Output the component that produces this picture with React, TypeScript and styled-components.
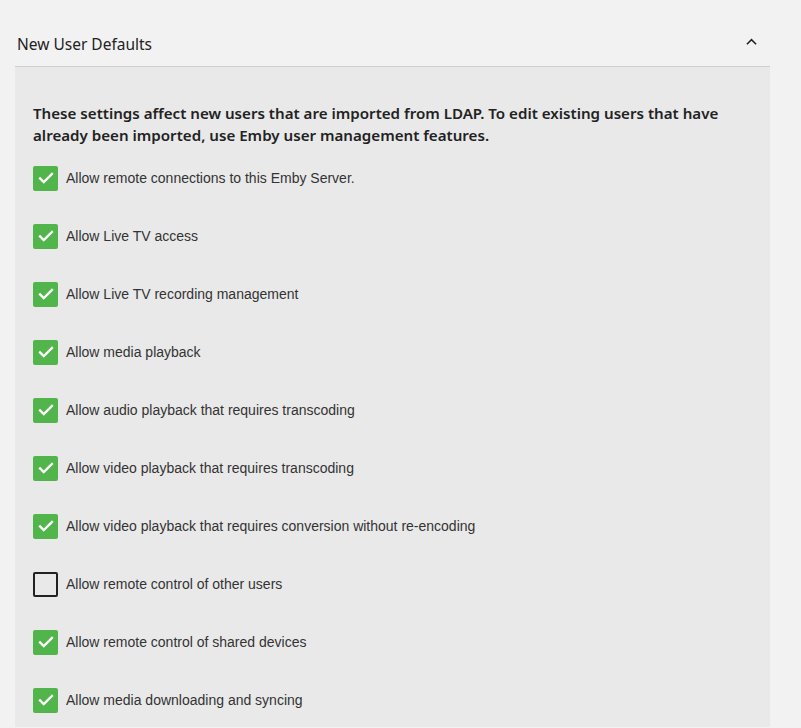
import React from "react";
import styled, { createGlobalStyle } from "styled-components";

const Global = createGlobalStyle`
  html, body { margin: 0; padding: 0; background: #f2f2f2; }
  body { font-family: "Noto Sans", "Open Sans", sans-serif; color: #222; }
`;

const Page = styled.div`
  padding: 0 31px 0 15px;
`;

const Header = styled.div`
  display: flex;
  align-items: center;
  justify-content: space-between;
  height: 66px;
  padding: 23px 13px 0 2px;
  box-sizing: border-box;
`;

const Title = styled.h2`
  margin: 0;
  font-family: "Noto Sans", "Open Sans", sans-serif;
  font-size: 15.5px;
  font-weight: 400;
  color: #222;
  line-height: 1;
`;

const Chevron = styled.svg`
  width: 11px;
  height: 11px;
  margin-top: -7px;
`;

const Panel = styled.section`
  background: #e9e9e9;
  border-top: 1px solid #cfcfcf;
  padding: 35px 18px 15px 18px;
`;

const Description = styled.p`
  margin: 0 0 20px 0;
  font-family: "Noto Sans", "Open Sans", sans-serif;
  font-size: 15.13px;
  font-weight: 600;
  line-height: 22px;
  color: #222;
`;

const List = styled.div`
  display: flex;
  flex-direction: column;
  gap: 34px;
`;

const Row = styled.label`
  display: flex;
  align-items: center;
  gap: 8px;
  height: 24px;
  font-family: "Liberation Sans", Arial, sans-serif;
  font-size: 14px;
  color: #333;
`;

const Box = styled.span<{ $checked: boolean }>`
  box-sizing: border-box;
  width: 25px;
  height: 25px;
  border-radius: 2px;
  display: inline-flex;
  align-items: center;
  justify-content: center;
  flex: none;
  background: ${(p) => (p.$checked ? "#52b54b" : "transparent")};
  border: ${(p) => (p.$checked ? "none" : "2px solid #222")};
`;

const items: [string, boolean][] = [
  ["Allow remote connections to this Emby Server.", true],
  ["Allow Live TV access", true],
  ["Allow Live TV recording management", true],
  ["Allow media playback", true],
  ["Allow audio playback that requires transcoding", true],
  ["Allow video playback that requires transcoding", true],
  ["Allow video playback that requires conversion without re-encoding", true],
  ["Allow remote control of other users", false],
  ["Allow remote control of shared devices", true],
  ["Allow media downloading and syncing", true],
];

export default function App() {
  return (
    <>
      <Global />
      <Page>
        <Header>
          <Title>New User Defaults</Title>
          <Chevron viewBox="0 0 24 24" fill="none" stroke="#222" strokeWidth="3.4">
            <path d="M2 18L12 8l10 10" />
          </Chevron>
        </Header>
        <Panel>
          <Description>
            These settings affect new users that are imported from LDAP. To edit existing users that have already been imported, use Emby user management features.
          </Description>
          <List>
            {items.map(([label, checked]) => (
              <Row key={label}>
                <Box $checked={checked}>
                  {checked && (
                    <svg width="18" height="18" viewBox="0 0 24 24" fill="none" stroke="#fff" strokeWidth="3" strokeLinecap="square">
                      <path d="M4 12.5l5 5L20 6.5" />
                    </svg>
                  )}
                </Box>
                {label}
              </Row>
            ))}
          </List>
        </Panel>
      </Page>
    </>
  );
}
